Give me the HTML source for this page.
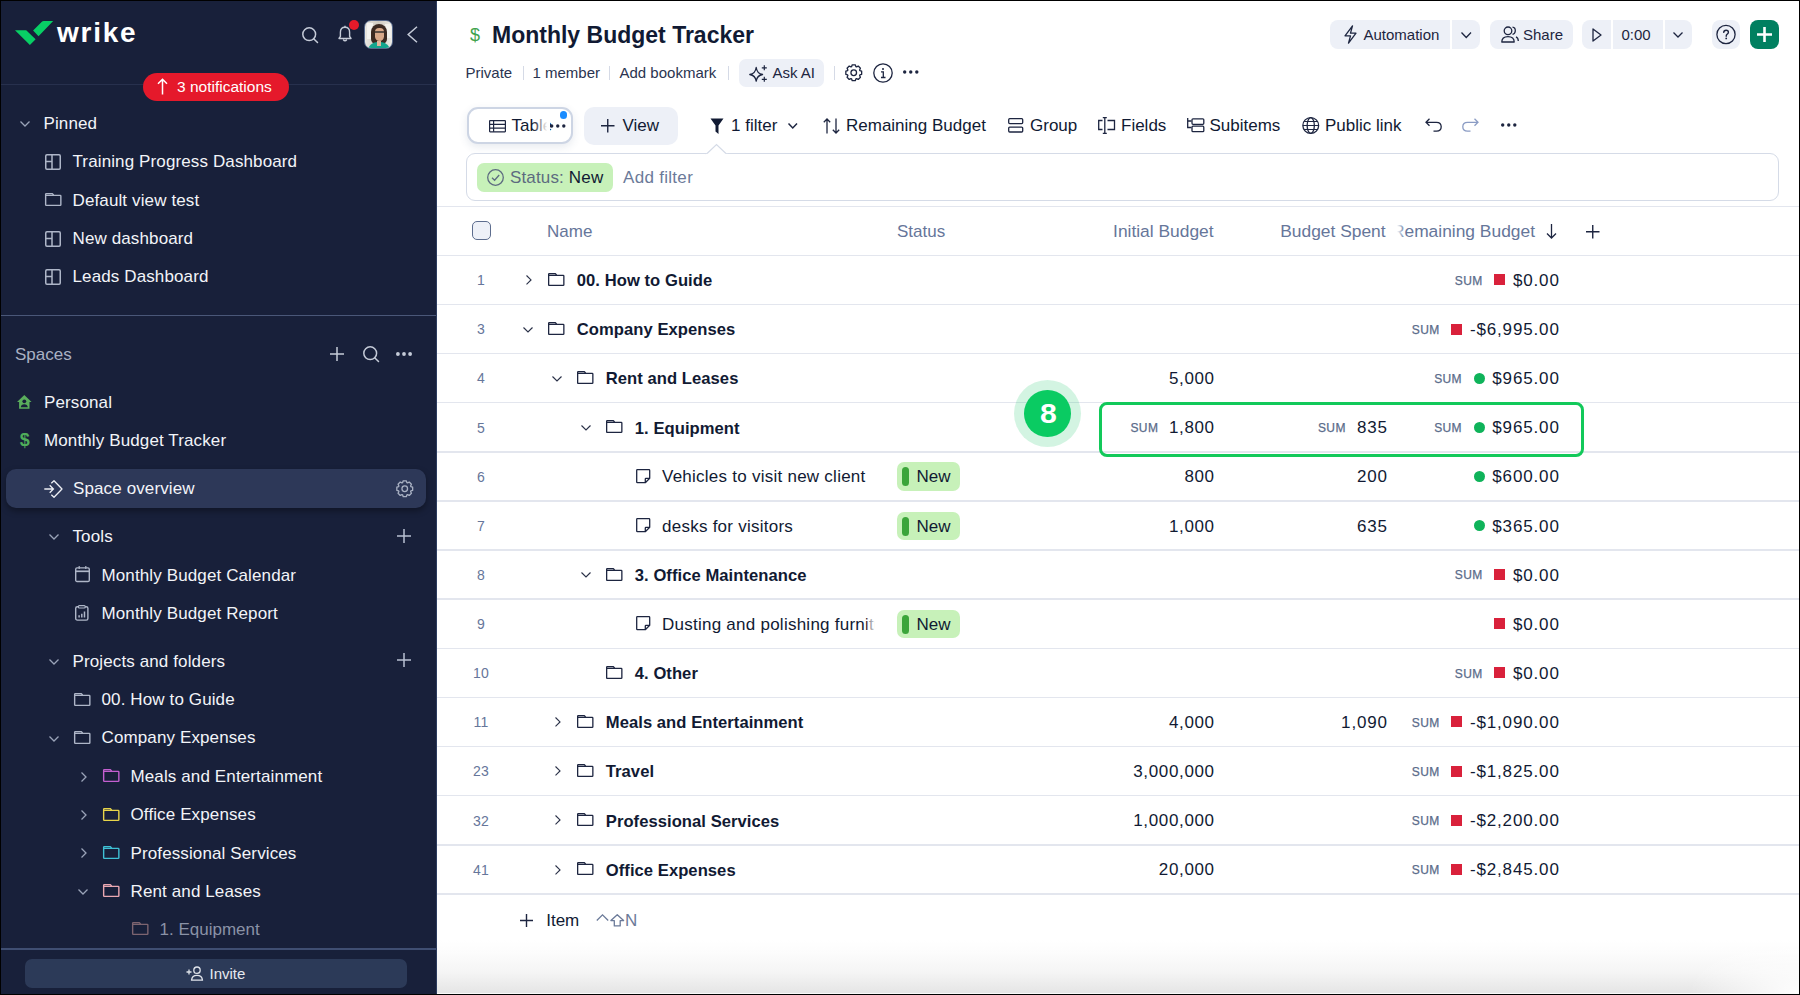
<!DOCTYPE html>
<html><head><meta charset="utf-8">
<style>
*{box-sizing:border-box;margin:0;padding:0}
html,body{width:1800px;height:995px;overflow:hidden;background:#000;font-family:"Liberation Sans",sans-serif}
.a{position:absolute}
.t{position:absolute;white-space:nowrap;font-size:17px;height:24px;line-height:24px}
svg{position:absolute;overflow:visible}
.num{position:absolute;width:40px;text-align:center;font-size:14px;color:#66769a;height:20px;line-height:20px;letter-spacing:0.3px}
.sum{position:absolute;font-size:12px;letter-spacing:.4px;color:#5a6b8a;-webkit-text-stroke:0.25px #5a6b8a;height:16px;line-height:16px}
.pill{position:absolute;width:63px;height:28.5px;border-radius:7px;background:#c7f1b9}
.pill i{position:absolute;left:5px;top:5px;width:7px;height:19px;border-radius:4px;background:#3ba53a}
.pill span{position:absolute;left:20px;top:2.3px;font-size:17px;line-height:24px;color:#111a33}
</style></head><body>
<div class="a" style="left:1px;top:1px;width:436px;height:993px;background:#18203a"></div>
<div class="a" style="left:437px;top:1px;width:1362px;height:993px;background:#fff"></div>
<div class="a" style="left:437px;top:940px;width:1362px;height:53px;background:radial-gradient(ellipse 110px 60px at 100% 100%,rgba(255,255,255,.95),rgba(255,255,255,0)),linear-gradient(#fff,#fcfcfc 25%,#f5f5f5 60%,#e5e5e5)"></div>
<div class="a" style="left:437px;top:993px;width:1362px;height:1px;background:#fafafa"></div>
<svg style="left:14px;top:20px" width="40" height="26" viewBox="0 0 40 26"><path d="M1 10.2 H12.2 L21.6 19.2 L15.9 25 Z" fill="#08cf65"/><path d="M19.1 10.5 L27.6 2 Q28.5 1.1 29.8 1.1 H39.2 L24.5 16.3 Z" fill="#08cf65"/></svg>
<div class="t" style="left:57.0px;top:21.3px;font-size:28px;height:24px;line-height:24px;color:#fff;font-weight:bold;letter-spacing:1.75px;">wrike</div>
<svg style="left:302px;top:27px" width="16" height="16" viewBox="0 0 16 16"><circle cx="7.2" cy="7.2" r="6.4" fill="none" stroke="#c5cbd8" stroke-width="1.5"/><path d="M11.680000000000001 11.680000000000001 L15.5 15.5" stroke="#c5cbd8" stroke-width="1.5" stroke-linecap="round"/></svg>
<svg style="left:337px;top:25px" width="16" height="18" viewBox="0 0 16 18"><path d="M2 13.5 H14 L12.6 11.3 V7.3 Q12.6 2.3 8 2.3 Q3.4 2.3 3.4 7.3 V11.3 Z" fill="none" stroke="#c5cbd8" stroke-width="1.4" stroke-linejoin="round"/><path d="M6.2 14.5 Q8 17 9.8 14.5" fill="none" stroke="#c5cbd8" stroke-width="1.4"/><path d="M8 0.8 V2.3" stroke="#c5cbd8" stroke-width="1.4"/></svg>
<div class="a" style="left:349px;top:20px;width:10px;height:10px;border-radius:50%;background:#e51a2a"></div>
<div class="a" style="left:364px;top:20px;width:29px;height:29px;border-radius:7px;border:1px solid #56698c;background:linear-gradient(90deg,#e9e7e2,#cfcac0 50%,#ecebe6);overflow:hidden"><div class="a" style="left:2px;top:2px;width:6px;height:16px;background:#f4f3ef"></div><div class="a" style="left:20px;top:3px;width:6px;height:14px;background:#f2f1ec"></div><div class="a" style="left:6px;top:3px;width:16px;height:20px;border-radius:8px 8px 5px 5px;background:#3b2a22"></div><div class="a" style="left:9.5px;top:7px;width:9px;height:13px;border-radius:4.5px 4.5px 5px 5px;background:#d8a98a"></div><div class="a" style="left:9.5px;top:10px;width:9px;height:2px;background:#2a2a2a;opacity:.7"></div><div class="a" style="left:3px;top:21px;width:22px;height:9px;border-radius:9px 9px 0 0;background:#13a58e"></div><div class="a" style="left:12px;top:20px;width:4px;height:5px;background:#e0b59a"></div></div>
<svg style="left:407px;top:26px" width="11" height="17" viewBox="0 0 11 17"><path d="M10 0.8 L1.2 8.5 L10 16.2" fill="none" stroke="#c5cbd8" stroke-width="1.5"/></svg>
<div class="a" style="left:1px;top:84px;width:436px;height:1px;background:#27304d;border-radius:0px;"></div>
<div class="a" style="left:143px;top:73px;width:146px;height:28px;background:#e5192b;border-radius:14px;"></div>
<svg style="left:157px;top:78px" width="11" height="17" viewBox="0 0 11 17"><path d="M5.5 16.5 V1.2 M1 5.8 L5.5 1.2 L10 5.8" fill="none" stroke="#fff" stroke-width="1.5"/></svg>
<div class="t" style="left:177.0px;top:75.1px;font-size:15.5px;height:24px;line-height:24px;color:#fff;">3 notifications</div>
<svg style="left:20px;top:121px" width="10" height="5.5" viewBox="0 0 10 5.5"><path d="M0.5 0.5 L5.0 5.0 L9.5 0.5" fill="none" stroke="#9aa3b8" stroke-width="1.3"/></svg>
<div class="t" style="left:43.5px;top:112.0px;font-size:17px;height:24px;line-height:24px;color:#f2f4f8;letter-spacing:0.12px;">Pinned</div>
<svg style="left:45px;top:154.2px" width="16" height="16" viewBox="0 0 16 16"><rect x="0.75" y="0.75" width="14.5" height="14.5" rx="1.2" fill="none" stroke="#aeb6c8" stroke-width="1.5"/><path d="M7 0.75 V15.25 M0.75 7.5 H7" stroke="#aeb6c8" stroke-width="1.5"/></svg>
<div class="t" style="left:72.5px;top:150.4px;font-size:17px;height:24px;line-height:24px;color:#f2f4f8;letter-spacing:0.12px;">Training Progress Dashboard</div>
<svg style="left:44.5px;top:192.7px" width="16.5" height="13" viewBox="0 0 16.5 13"><path d="M0.65 2.4 V1.3 Q0.65 0.65 1.3 0.65 H7.4 L8.9 2.4 H15.2 Q15.85 2.4 15.85 3.1 V11.7 Q15.85 12.35 15.2 12.35 H1.3 Q0.65 12.35 0.65 11.7 Z M0.65 2.4 H8.9" fill="none" stroke="#aeb6c8" stroke-width="1.4" stroke-linejoin="round"/></svg>
<div class="t" style="left:72.5px;top:188.7px;font-size:17px;height:24px;line-height:24px;color:#f2f4f8;letter-spacing:0.12px;">Default view test</div>
<svg style="left:45px;top:230.5px" width="16" height="16" viewBox="0 0 16 16"><rect x="0.75" y="0.75" width="14.5" height="14.5" rx="1.2" fill="none" stroke="#aeb6c8" stroke-width="1.5"/><path d="M7 0.75 V15.25 M0.75 7.5 H7" stroke="#aeb6c8" stroke-width="1.5"/></svg>
<div class="t" style="left:72.5px;top:227.1px;font-size:17px;height:24px;line-height:24px;color:#f2f4f8;letter-spacing:0.12px;">New dashboard</div>
<svg style="left:45px;top:269px" width="16" height="16" viewBox="0 0 16 16"><rect x="0.75" y="0.75" width="14.5" height="14.5" rx="1.2" fill="none" stroke="#aeb6c8" stroke-width="1.5"/><path d="M7 0.75 V15.25 M0.75 7.5 H7" stroke="#aeb6c8" stroke-width="1.5"/></svg>
<div class="t" style="left:72.5px;top:265.4px;font-size:17px;height:24px;line-height:24px;color:#f2f4f8;letter-spacing:0.12px;">Leads Dashboard</div>
<div class="a" style="left:1px;top:315px;width:435px;height:1px;background:#4a5778;border-radius:0px;"></div>
<div class="t" style="left:15.0px;top:343.2px;font-size:17px;height:24px;line-height:24px;color:#a9b1c3;">Spaces</div>
<svg style="left:330px;top:346.5px" width="14" height="14" viewBox="0 0 14 14"><path d="M7.0 0 V14 M0 7.0 H14" stroke="#c5cbd8" stroke-width="1.5"/></svg>
<svg style="left:362.5px;top:346px" width="16" height="16" viewBox="0 0 16 16"><circle cx="7.2" cy="7.2" r="6.4" fill="none" stroke="#c5cbd8" stroke-width="1.5"/><path d="M11.680000000000001 11.680000000000001 L15.5 15.5" stroke="#c5cbd8" stroke-width="1.5" stroke-linecap="round"/></svg>
<svg style="left:396px;top:351.6px" width="16" height="4" viewBox="0 0 16 4"><circle cx="1.9" cy="2" r="1.9" fill="#c5cbd8"/><circle cx="8.0" cy="2" r="1.9" fill="#c5cbd8"/><circle cx="14.1" cy="2" r="1.9" fill="#c5cbd8"/></svg>
<svg style="left:17px;top:395.3px" width="14.6" height="14" viewBox="0 0 14.6 14"><path d="M7.3 0 L14.6 6.9 H12.5 V13.8 H2.1 V6.9 H0 Z" fill="#5aae5c"/><circle cx="7.3" cy="6.3" r="1.9" fill="#18203a"/><path d="M3.8 12.2 Q4.1 9.3 7.3 9.3 Q10.5 9.3 10.8 12.2 Z" fill="#18203a"/></svg>
<div class="t" style="left:44.0px;top:391.2px;font-size:17px;height:24px;line-height:24px;color:#f2f4f8;letter-spacing:0.12px;">Personal</div>
<div class="t" style="left:19.8px;top:428.1px;font-size:18px;height:24px;line-height:24px;color:#4fae5a;font-weight:bold;">$</div>
<div class="t" style="left:44.0px;top:429.0px;font-size:17px;height:24px;line-height:24px;color:#f2f4f8;letter-spacing:0.12px;">Monthly Budget Tracker</div>
<div class="a" style="left:6px;top:469px;width:420px;height:38.5px;background:#2d3858;border-radius:10px;box-shadow:0 3px 6px rgba(0,0,0,.35);"></div>
<svg style="left:44px;top:479.5px" width="19" height="18" viewBox="0 0 19 18"><path d="M0.3 9 H9.4 M5.7 5.3 L9.4 9 L5.7 12.7" fill="none" stroke="#eef0f5" stroke-width="1.3"/><path d="M7.3 3.3 L10 0.8 L18 9 L10 17.2 L7.3 14.7" fill="none" stroke="#eef0f5" stroke-width="1.3" stroke-linejoin="round"/></svg>
<div class="t" style="left:73.0px;top:477.3px;font-size:17px;height:24px;line-height:24px;color:#f2f4f8;letter-spacing:0.12px;">Space overview</div>
<svg style="left:396px;top:479.5px" width="17.5" height="17.5" viewBox="0 0 17.5 17.5"><path d="M14.84 6.56 L16.66 7.23 L16.66 10.27 L14.84 10.94 L14.61 11.51 L15.42 13.26 L13.26 15.42 L11.51 14.61 L10.94 14.84 L10.27 16.66 L7.23 16.66 L6.56 14.84 L5.99 14.61 L4.24 15.42 L2.08 13.26 L2.89 11.51 L2.66 10.94 L0.84 10.27 L0.84 7.23 L2.66 6.56 L2.89 5.99 L2.08 4.24 L4.24 2.08 L5.99 2.89 L6.56 2.66 L7.23 0.84 L10.27 0.84 L10.94 2.66 L11.51 2.89 L13.26 2.08 L15.42 4.24 L14.61 5.99 Z" fill="none" stroke="#a9b1c3" stroke-width="1.3" stroke-linejoin="round"/><circle cx="8.75" cy="8.75" r="2.80" fill="none" stroke="#a9b1c3" stroke-width="1.3"/></svg>
<svg style="left:49px;top:534px" width="10" height="5.5" viewBox="0 0 10 5.5"><path d="M0.5 0.5 L5.0 5.0 L9.5 0.5" fill="none" stroke="#9aa3b8" stroke-width="1.3"/></svg>
<div class="t" style="left:72.5px;top:525.2px;font-size:17px;height:24px;line-height:24px;color:#f2f4f8;letter-spacing:0.12px;">Tools</div>
<svg style="left:397px;top:528.6px" width="14" height="14" viewBox="0 0 14 14"><path d="M7.0 0 V14 M0 7.0 H14" stroke="#b8c0d2" stroke-width="1.5"/></svg>
<svg style="left:75px;top:565.8px" width="15" height="16.2" viewBox="0 0 15 16.2"><rect x="0.7" y="1.9" width="13.6" height="13.6" rx="1.3" fill="none" stroke="#aeb6c8" stroke-width="1.4"/><path d="M0.7 5.3 H14.3" stroke="#aeb6c8" stroke-width="1.7"/><path d="M4.2 0 V3 M10.8 0 V3" stroke="#aeb6c8" stroke-width="1.2"/></svg>
<div class="t" style="left:101.5px;top:564.3px;font-size:17px;height:24px;line-height:24px;color:#f2f4f8;letter-spacing:0.12px;">Monthly Budget Calendar</div>
<svg style="left:75.2px;top:604.6px" width="13.6" height="15.8" viewBox="0 0 13.6 15.8"><rect x="0.7" y="1.7" width="12.2" height="13.4" rx="1.6" fill="none" stroke="#aeb6c8" stroke-width="1.4"/><rect x="3.4" y="0.6" width="6.8" height="2.4" rx="0.9" fill="#18203a" stroke="#aeb6c8" stroke-width="1.2"/><path d="M4.1 12.6 V10.2 M6.8 12.6 V8.8 M9.5 12.6 V6.6" stroke="#aeb6c8" stroke-width="1.5"/></svg>
<div class="t" style="left:101.5px;top:601.5px;font-size:17px;height:24px;line-height:24px;color:#f2f4f8;letter-spacing:0.12px;">Monthly Budget Report</div>
<svg style="left:49px;top:658.5px" width="10" height="5.5" viewBox="0 0 10 5.5"><path d="M0.5 0.5 L5.0 5.0 L9.5 0.5" fill="none" stroke="#9aa3b8" stroke-width="1.3"/></svg>
<div class="t" style="left:72.5px;top:649.5px;font-size:17px;height:24px;line-height:24px;color:#f2f4f8;letter-spacing:0.12px;">Projects and folders</div>
<svg style="left:397px;top:653.4px" width="14" height="14" viewBox="0 0 14 14"><path d="M7.0 0 V14 M0 7.0 H14" stroke="#b8c0d2" stroke-width="1.5"/></svg>
<svg style="left:74px;top:692.5px" width="16.5" height="13" viewBox="0 0 16.5 13"><path d="M0.65 2.4 V1.3 Q0.65 0.65 1.3 0.65 H7.4 L8.9 2.4 H15.2 Q15.85 2.4 15.85 3.1 V11.7 Q15.85 12.35 15.2 12.35 H1.3 Q0.65 12.35 0.65 11.7 Z M0.65 2.4 H8.9" fill="none" stroke="#aeb6c8" stroke-width="1.4" stroke-linejoin="round"/></svg>
<div class="t" style="left:101.5px;top:688.1px;font-size:17px;height:24px;line-height:24px;color:#f2f4f8;letter-spacing:0.12px;">00. How to Guide</div>
<svg style="left:49px;top:735.5px" width="10" height="5.5" viewBox="0 0 10 5.5"><path d="M0.5 0.5 L5.0 5.0 L9.5 0.5" fill="none" stroke="#9aa3b8" stroke-width="1.3"/></svg>
<svg style="left:74px;top:730.7px" width="16.5" height="13" viewBox="0 0 16.5 13"><path d="M0.65 2.4 V1.3 Q0.65 0.65 1.3 0.65 H7.4 L8.9 2.4 H15.2 Q15.85 2.4 15.85 3.1 V11.7 Q15.85 12.35 15.2 12.35 H1.3 Q0.65 12.35 0.65 11.7 Z M0.65 2.4 H8.9" fill="none" stroke="#aeb6c8" stroke-width="1.4" stroke-linejoin="round"/></svg>
<div class="t" style="left:101.5px;top:726.3px;font-size:17px;height:24px;line-height:24px;color:#f2f4f8;letter-spacing:0.12px;">Company Expenses</div>
<svg style="left:81px;top:771.5px" width="5.5" height="10" viewBox="0 0 5.5 10"><path d="M0.5 0.5 L5.0 5.0 L0.5 9.5" fill="none" stroke="#9aa3b8" stroke-width="1.3"/></svg>
<svg style="left:102.5px;top:769.2px" width="16.5" height="13" viewBox="0 0 16.5 13"><path d="M0.65 2.4 V1.3 Q0.65 0.65 1.3 0.65 H7.4 L8.9 2.4 H15.2 Q15.85 2.4 15.85 3.1 V11.7 Q15.85 12.35 15.2 12.35 H1.3 Q0.65 12.35 0.65 11.7 Z M0.65 2.4 H8.9" fill="none" stroke="#c35fd0" stroke-width="1.4" stroke-linejoin="round"/></svg>
<div class="t" style="left:130.5px;top:764.9px;font-size:17px;height:24px;line-height:24px;color:#f2f4f8;letter-spacing:0.12px;">Meals and Entertainment</div>
<svg style="left:81px;top:809.7px" width="5.5" height="10" viewBox="0 0 5.5 10"><path d="M0.5 0.5 L5.0 5.0 L0.5 9.5" fill="none" stroke="#9aa3b8" stroke-width="1.3"/></svg>
<svg style="left:102.5px;top:807.5px" width="16.5" height="13" viewBox="0 0 16.5 13"><path d="M0.65 2.4 V1.3 Q0.65 0.65 1.3 0.65 H7.4 L8.9 2.4 H15.2 Q15.85 2.4 15.85 3.1 V11.7 Q15.85 12.35 15.2 12.35 H1.3 Q0.65 12.35 0.65 11.7 Z M0.65 2.4 H8.9" fill="none" stroke="#e8d54a" stroke-width="1.4" stroke-linejoin="round"/></svg>
<div class="t" style="left:130.5px;top:803.1px;font-size:17px;height:24px;line-height:24px;color:#f2f4f8;letter-spacing:0.12px;">Office Expenses</div>
<svg style="left:81px;top:848.2px" width="5.5" height="10" viewBox="0 0 5.5 10"><path d="M0.5 0.5 L5.0 5.0 L0.5 9.5" fill="none" stroke="#9aa3b8" stroke-width="1.3"/></svg>
<svg style="left:102.5px;top:846.0px" width="16.5" height="13" viewBox="0 0 16.5 13"><path d="M0.65 2.4 V1.3 Q0.65 0.65 1.3 0.65 H7.4 L8.9 2.4 H15.2 Q15.85 2.4 15.85 3.1 V11.7 Q15.85 12.35 15.2 12.35 H1.3 Q0.65 12.35 0.65 11.7 Z M0.65 2.4 H8.9" fill="none" stroke="#3fc1d6" stroke-width="1.4" stroke-linejoin="round"/></svg>
<div class="t" style="left:130.5px;top:841.6px;font-size:17px;height:24px;line-height:24px;color:#f2f4f8;letter-spacing:0.12px;">Professional Services</div>
<svg style="left:78px;top:889px" width="10" height="5.5" viewBox="0 0 10 5.5"><path d="M0.5 0.5 L5.0 5.0 L9.5 0.5" fill="none" stroke="#9aa3b8" stroke-width="1.3"/></svg>
<svg style="left:102.5px;top:884.2px" width="16.5" height="13" viewBox="0 0 16.5 13"><path d="M0.65 2.4 V1.3 Q0.65 0.65 1.3 0.65 H7.4 L8.9 2.4 H15.2 Q15.85 2.4 15.85 3.1 V11.7 Q15.85 12.35 15.2 12.35 H1.3 Q0.65 12.35 0.65 11.7 Z M0.65 2.4 H8.9" fill="none" stroke="#eaa8b2" stroke-width="1.4" stroke-linejoin="round"/></svg>
<div class="t" style="left:130.5px;top:879.9px;font-size:17px;height:24px;line-height:24px;color:#f2f4f8;letter-spacing:0.12px;">Rent and Leases</div>
<svg style="left:131.5px;top:921.8px" width="16.5" height="13" viewBox="0 0 16.5 13"><path d="M0.65 2.4 V1.3 Q0.65 0.65 1.3 0.65 H7.4 L8.9 2.4 H15.2 Q15.85 2.4 15.85 3.1 V11.7 Q15.85 12.35 15.2 12.35 H1.3 Q0.65 12.35 0.65 11.7 Z M0.65 2.4 H8.9" fill="none" stroke="#7d6470" stroke-width="1.4" stroke-linejoin="round"/></svg>
<div class="t" style="left:159.5px;top:918.3px;font-size:17px;height:24px;line-height:24px;color:#8a92a6;">1. Equipment</div>
<div class="a" style="left:1px;top:947.8px;width:435px;height:2px;background:#3f4e72;border-radius:0px;"></div>
<div class="a" style="left:25px;top:959px;width:382px;height:28.5px;background:#2c3a58;border-radius:7px;"></div>
<svg style="left:186px;top:966px" width="17" height="15" viewBox="0 0 17 15"><path d="M0.5 6 H5.5 M3 3.5 V8.5" stroke="#dfe3ea" stroke-width="1.3"/><circle cx="11" cy="4.2" r="3.2" fill="none" stroke="#dfe3ea" stroke-width="1.3"/><path d="M5.5 14.2 Q6 9.3 11 9.3 Q16 9.3 16.5 14.2 Z" fill="none" stroke="#dfe3ea" stroke-width="1.3" stroke-linejoin="round"/></svg>
<div class="t" style="left:209.5px;top:961.8px;font-size:15px;height:24px;line-height:24px;color:#e6e9ef;">Invite</div>
<div class="a" style="left:436px;top:1px;width:1px;height:993px;background:#2c3c5f;border-radius:0px;"></div>
<div class="t" style="left:470.0px;top:22.7px;font-size:18px;height:24px;line-height:24px;color:#3fa34d;">$</div>
<div class="t" style="left:492.0px;top:22.9px;font-size:23px;height:24px;line-height:24px;color:#111a33;font-weight:bold;">Monthly Budget Tracker</div>
<div class="t" style="left:465.5px;top:60.8px;font-size:15px;height:24px;line-height:24px;color:#2a3450;">Private</div>
<div class="a" style="left:522.5px;top:66px;width:1.2px;height:14px;background:#d5dae6;border-radius:0px;"></div>
<div class="t" style="left:532.5px;top:60.8px;font-size:15px;height:24px;line-height:24px;color:#2a3450;">1 member</div>
<div class="a" style="left:609px;top:66px;width:1.2px;height:14px;background:#d5dae6;border-radius:0px;"></div>
<div class="t" style="left:619.5px;top:60.8px;font-size:15px;height:24px;line-height:24px;color:#2a3450;">Add bookmark</div>
<div class="a" style="left:727.7px;top:66px;width:1.2px;height:14px;background:#d5dae6;border-radius:0px;"></div>
<div class="a" style="left:739px;top:59px;width:85px;height:28px;background:#edf0f7;border-radius:7px;"></div>
<svg style="left:748.5px;top:64.5px" width="19" height="17.5" viewBox="0 0 19 17.5"><path d="M7.2 2.5 Q8 8.6 13.6 9.5 Q8 10.4 7.2 16.2 Q6.4 10.4 0.8 9.5 Q6.4 8.6 7.2 2.5 Z" fill="none" stroke="#1d2540" stroke-width="1.3" stroke-linejoin="round"/><path d="M15.3 0.3 V5.3 M12.8 2.8 H17.8 M15.3 11.8 V16.8 M12.8 14.3 H17.8" stroke="#1d2540" stroke-width="1.2"/></svg>
<div class="t" style="left:772.5px;top:60.8px;font-size:15px;height:24px;line-height:24px;color:#1d2540;">Ask AI</div>
<div class="a" style="left:834px;top:66px;width:1.2px;height:14px;background:#d5dae6;border-radius:0px;"></div>
<svg style="left:845px;top:64px" width="17.5" height="17.5" viewBox="0 0 17.5 17.5"><path d="M14.84 6.56 L16.66 7.23 L16.66 10.27 L14.84 10.94 L14.61 11.51 L15.42 13.26 L13.26 15.42 L11.51 14.61 L10.94 14.84 L10.27 16.66 L7.23 16.66 L6.56 14.84 L5.99 14.61 L4.24 15.42 L2.08 13.26 L2.89 11.51 L2.66 10.94 L0.84 10.27 L0.84 7.23 L2.66 6.56 L2.89 5.99 L2.08 4.24 L4.24 2.08 L5.99 2.89 L6.56 2.66 L7.23 0.84 L10.27 0.84 L10.94 2.66 L11.51 2.89 L13.26 2.08 L15.42 4.24 L14.61 5.99 Z" fill="none" stroke="#1d2540" stroke-width="1.3" stroke-linejoin="round"/><circle cx="8.75" cy="8.75" r="2.80" fill="none" stroke="#1d2540" stroke-width="1.3"/></svg>
<svg style="left:872.5px;top:63px" width="20" height="20" viewBox="0 0 20 20"><circle cx="10" cy="10" r="9.2" fill="none" stroke="#1d2540" stroke-width="1.3"/><circle cx="10" cy="6" r="1" fill="#1d2540"/><path d="M8 8.8 H10.3 V14.5 M8 14.5 H12.5" fill="none" stroke="#1d2540" stroke-width="1.3"/></svg>
<svg style="left:903px;top:70px" width="15.5" height="4" viewBox="0 0 15.5 4"><circle cx="1.7" cy="2" r="1.7" fill="#1d2540"/><circle cx="7.75" cy="2" r="1.7" fill="#1d2540"/><circle cx="13.8" cy="2" r="1.7" fill="#1d2540"/></svg>
<div class="a" style="left:1330px;top:20px;width:150px;height:28.5px;background:#edf0f7;border-radius:8px;"></div>
<div class="a" style="left:1450px;top:20px;width:2px;height:28.5px;background:#fff;border-radius:0px;"></div>
<svg style="left:1343.5px;top:24.5px" width="13" height="19" viewBox="0 0 13 19"><path d="M8.5 0.8 L1 10.8 H6.5 L4.5 18.2 L12 8.2 H6.5 Z" fill="none" stroke="#1d2540" stroke-width="1.3" stroke-linejoin="round"/></svg>
<div class="t" style="left:1363.5px;top:22.5px;font-size:15px;height:24px;line-height:24px;color:#1d2540;">Automation</div>
<svg style="left:1461px;top:31.5px" width="10.5" height="6" viewBox="0 0 10.5 6"><path d="M0.5 0.5 L5.25 5.5 L10.0 0.5" fill="none" stroke="#1d2540" stroke-width="1.3"/></svg>
<div class="a" style="left:1490px;top:20px;width:82.5px;height:28.5px;background:#edf0f7;border-radius:8px;"></div>
<svg style="left:1501px;top:25.5px" width="18" height="17" viewBox="0 0 18 17"><circle cx="7" cy="4.8" r="3.8" fill="none" stroke="#1d2540" stroke-width="1.3"/><path d="M0.8 16 Q0.8 10.6 7 10.6 Q13.2 10.6 13.2 16 Z" fill="none" stroke="#1d2540" stroke-width="1.3" stroke-linejoin="round"/><path d="M11.5 1.2 Q14.5 1.5 14.3 5 Q14 8 11.5 8.3 M15 10.8 Q17.3 11.8 17.3 15" fill="none" stroke="#1d2540" stroke-width="1.3"/></svg>
<div class="t" style="left:1523.0px;top:22.5px;font-size:15px;height:24px;line-height:24px;color:#1d2540;">Share</div>
<div class="a" style="left:1582px;top:20px;width:110px;height:28.5px;background:#edf0f7;border-radius:8px;"></div>
<div class="a" style="left:1611px;top:20px;width:2px;height:28.5px;background:#fff;border-radius:0px;"></div>
<div class="a" style="left:1662.5px;top:20px;width:2px;height:28.5px;background:#fff;border-radius:0px;"></div>
<svg style="left:1592px;top:27.5px" width="10" height="14" viewBox="0 0 10 14"><path d="M1 1 L9 7 L1 13 Z" fill="none" stroke="#1d2540" stroke-width="1.3" stroke-linejoin="round"/></svg>
<div class="t" style="left:1621.5px;top:22.5px;font-size:15px;height:24px;line-height:24px;color:#1d2540;">0:00</div>
<svg style="left:1673px;top:31.5px" width="10" height="5.5" viewBox="0 0 10 5.5"><path d="M0.5 0.5 L5.0 5.0 L9.5 0.5" fill="none" stroke="#1d2540" stroke-width="1.3"/></svg>
<div class="a" style="left:1712px;top:20px;width:28px;height:28.5px;background:#edf0f7;border-radius:8px;"></div>
<svg style="left:1716px;top:25px" width="20" height="20" viewBox="0 0 20 20"><circle cx="10" cy="9.5" r="9.1" fill="none" stroke="#1d2540" stroke-width="1.3"/><path d="M7.7 7.4 Q7.9 5.2 10.1 5.2 Q12.4 5.2 12.4 7.3 Q12.4 8.7 11 9.4 Q10.2 9.9 10.2 11.3" fill="none" stroke="#1d2540" stroke-width="1.4" stroke-linecap="round"/><circle cx="10.2" cy="13.4" r="0.9" fill="#1d2540"/></svg>
<div class="a" style="left:1750px;top:20px;width:28.5px;height:28.5px;background:#008060;border-radius:8px;"></div>
<svg style="left:1757px;top:27px" width="15" height="15" viewBox="0 0 15 15"><path d="M7.5 0 V15 M0 7.5 H15" stroke="#fff" stroke-width="2.6"/></svg>
<div class="a" style="left:467px;top:107px;width:106px;height:36.5px;border:2px solid #cdd5e4;border-radius:11px;background:#fff;box-shadow:0 3px 8px rgba(60,80,120,.12)"></div>
<svg style="left:488.5px;top:119.8px" width="17" height="12.5" viewBox="0 0 17 12.5"><rect x="0.6" y="0.6" width="15.8" height="11.2" rx="0.5" fill="none" stroke="#1d2540" stroke-width="1.2"/><path d="M0.6 4.4 H16.4 M0.6 8.1 H16.4 M4.6 0.6 V11.8" stroke="#1d2540" stroke-width="1.2"/></svg>
<div class="t" style="left:511.5px;top:114.2px;font-size:17px;height:24px;line-height:24px;color:#111a33;">Table</div>
<div class="a" style="left:533px;top:112px;width:17px;height:26px;background:linear-gradient(90deg,rgba(255,255,255,0),#fff 85%)"></div>
<svg style="left:549.5px;top:123.5px" width="15.5" height="4" viewBox="0 0 15.5 4"><circle cx="1.7" cy="2" r="1.7" fill="#1d2540"/><circle cx="7.75" cy="2" r="1.7" fill="#1d2540"/><circle cx="13.8" cy="2" r="1.7" fill="#1d2540"/></svg>
<div class="a" style="left:559.5px;top:111px;width:7.5px;height:7.5px;border-radius:50%;background:#1a8cff"></div>
<div class="a" style="left:584px;top:106.5px;width:94px;height:38px;background:#edf0f7;border-radius:10px;"></div>
<svg style="left:601px;top:118.5px" width="13.5" height="13.5" viewBox="0 0 13.5 13.5"><path d="M6.75 0 V13.5 M0 6.75 H13.5" stroke="#1d2540" stroke-width="1.4"/></svg>
<div class="t" style="left:622.5px;top:114.2px;font-size:17px;height:24px;line-height:24px;color:#111a33;">View</div>
<svg style="left:710px;top:118px" width="14" height="16.5" viewBox="0 0 14 16.5"><path d="M0.5 0.5 H13.5 L8.5 7.5 V16 L5.5 13.5 V7.5 Z" fill="#111a33"/></svg>
<div class="t" style="left:731.0px;top:114.4px;font-size:17px;height:24px;line-height:24px;color:#111a33;">1 filter</div>
<svg style="left:788px;top:122.5px" width="9.5" height="5.5" viewBox="0 0 9.5 5.5"><path d="M0.5 0.5 L4.75 5.0 L9.0 0.5" fill="none" stroke="#1d2540" stroke-width="1.5"/></svg>
<svg style="left:822.5px;top:117.5px" width="17.5" height="16" viewBox="0 0 17.5 16"><path d="M4 15.5 V1 M0.8 4.2 L4 1 L7.2 4.2 M13 0.5 V15 M9.8 11.8 L13 15 L16.2 11.8" fill="none" stroke="#1d2540" stroke-width="1.3"/></svg>
<div class="t" style="left:846.0px;top:114.4px;font-size:17px;height:24px;line-height:24px;color:#111a33;">Remaining Budget</div>
<svg style="left:1008px;top:118px" width="15.5" height="14.5" viewBox="0 0 15.5 14.5"><rect x="0.7" y="0.7" width="14" height="4.9" rx="1" fill="none" stroke="#1d2540" stroke-width="1.3"/><rect x="0.7" y="9.1" width="14" height="4.9" rx="1" fill="none" stroke="#1d2540" stroke-width="1.3"/></svg>
<div class="t" style="left:1030.0px;top:114.4px;font-size:17px;height:24px;line-height:24px;color:#111a33;">Group</div>
<svg style="left:1098px;top:117px" width="17.5" height="17" viewBox="0 0 17.5 17"><path d="M4.5 3.5 H0.7 V12.5 H4.5 M9.5 3.5 H16.5 V12.5 H9.5 M6.8 0.7 V16.3 M4.8 0.7 H8.8 M4.8 16.3 H8.8" fill="none" stroke="#1d2540" stroke-width="1.3"/></svg>
<div class="t" style="left:1121.0px;top:114.4px;font-size:17px;height:24px;line-height:24px;color:#111a33;">Fields</div>
<svg style="left:1186.5px;top:118px" width="17.5" height="14.5" viewBox="0 0 17.5 14.5"><path d="M0.7 0 V9.5 H4.5 M0.7 3 H4.5" fill="none" stroke="#1d2540" stroke-width="1.3"/><rect x="5" y="0.8" width="11.8" height="5.5" rx="1" fill="none" stroke="#1d2540" stroke-width="1.3"/><rect x="5" y="8.2" width="11.8" height="5.5" rx="1" fill="none" stroke="#1d2540" stroke-width="1.3"/></svg>
<div class="t" style="left:1209.5px;top:114.4px;font-size:17px;height:24px;line-height:24px;color:#111a33;">Subitems</div>
<svg style="left:1301.5px;top:117px" width="17.5" height="17" viewBox="0 0 17.5 17"><circle cx="8.75" cy="8.5" r="7.9" fill="none" stroke="#1d2540" stroke-width="1.3"/><ellipse cx="8.75" cy="8.5" rx="3.6" ry="7.9" fill="none" stroke="#1d2540" stroke-width="1.3"/><path d="M1 8.5 H16.5 M2.2 4.5 H15.3 M2.2 12.5 H15.3" stroke="#1d2540" stroke-width="1.2"/></svg>
<div class="t" style="left:1325.0px;top:114.4px;font-size:17px;height:24px;line-height:24px;color:#111a33;">Public link</div>
<svg style="left:1424.5px;top:118px" width="17" height="14" viewBox="0 0 17 14"><path d="M4.5 0.8 L1 4.3 L4.5 7.8 M1 4.3 H11.5 Q16.2 4.3 16.2 8.8 Q16.2 13.2 11.5 13.2 H8.5" fill="none" stroke="#1d2540" stroke-width="1.3"/></svg>
<svg style="left:1462px;top:118px" width="17" height="14" viewBox="0 0 17 14"><path d="M12.5 0.8 L16 4.3 L12.5 7.8 M16 4.3 H5.5 Q0.8 4.3 0.8 8.8 Q0.8 13.2 5.5 13.2 H8.5" fill="none" stroke="#8b9cc4" stroke-width="1.3"/></svg>
<svg style="left:1500.5px;top:123px" width="15.5" height="4" viewBox="0 0 15.5 4"><circle cx="1.7" cy="2" r="1.7" fill="#1d2540"/><circle cx="7.75" cy="2" r="1.7" fill="#1d2540"/><circle cx="13.8" cy="2" r="1.7" fill="#1d2540"/></svg>
<div class="a" style="left:466px;top:153.3px;width:1312.5px;height:47.5px;border:1.2px solid #d5dbe7;border-radius:9px;background:#fff"></div>
<svg style="left:705.5px;top:143.5px" width="22" height="11" viewBox="0 0 22 11"><path d="M0 10.5 L10.5 0.5 L21 10.5" fill="#fff" stroke="#d5dbe7" stroke-width="1.2"/><rect x="0" y="9.9" width="22" height="2" fill="#fff"/></svg>
<div class="a" style="left:477px;top:163px;width:136px;height:28.5px;background:#c7f1b9;border-radius:7px;"></div>
<svg style="left:487px;top:169px" width="17" height="17" viewBox="0 0 17 17"><circle cx="8.5" cy="8.5" r="7.8" fill="none" stroke="#5d6b80" stroke-width="1.3"/><path d="M5 8.7 L7.6 11.2 L12.2 6" fill="none" stroke="#5d6b80" stroke-width="1.3"/></svg>
<div class="t" style="left:510.0px;top:165.5px;font-size:17px;height:24px;line-height:24px;color:#5d6b80;letter-spacing:0.15px;">Status: <span style="color:#111a33">New</span></div>
<div class="t" style="left:623.0px;top:165.5px;font-size:17px;height:24px;line-height:24px;color:#6b7a99;letter-spacing:0.3px;">Add filter</div>
<div class="a" style="left:437px;top:205.8px;width:1362px;height:1.2px;background:#e3e6ee;border-radius:0px;"></div>
<div class="a" style="left:472px;top:221.2px;width:19px;height:19px;border:1.5px solid #5d6d8e;border-radius:5px;background:#eef1f8"></div>
<div class="t" style="left:547.0px;top:219.7px;font-size:17px;height:24px;line-height:24px;color:#66769a;">Name</div>
<div class="t" style="left:897.0px;top:219.7px;font-size:17px;height:24px;line-height:24px;color:#66769a;">Status</div>
<div class="t" style="right:586.4px;top:219.1px;font-size:17.4px;height:24px;line-height:24px;color:#66769a;">Initial Budget</div>
<div class="t" style="right:414.4px;top:219.1px;font-size:17.4px;height:24px;line-height:24px;color:#66769a;">Budget Spent</div>
<div class="a" style="left:1397px;top:212px;width:141px;height:36px;overflow:hidden"><div class="t" style="right:3px;top:7.1px;color:#66769a;font-size:17.4px">Remaining Budget</div><div class="a" style="left:0;top:0;width:8px;height:36px;background:linear-gradient(90deg,#fff,rgba(255,255,255,0))"></div></div>
<svg style="left:1545.5px;top:224px" width="11" height="15" viewBox="0 0 11 15"><path d="M5.5 0 V14 M1 9.5 L5.5 14 L10 9.5" fill="none" stroke="#1d2540" stroke-width="1.3"/></svg>
<svg style="left:1586px;top:224.5px" width="13.5" height="13.5" viewBox="0 0 13.5 13.5"><path d="M6.75 0 V13.5 M0 6.75 H13.5" stroke="#1d2540" stroke-width="1.4"/></svg>
<div class="a" style="left:437px;top:254.5px;width:1362px;height:1.5px;background:#e3e6ee;border-radius:0px;"></div>
<div class="num" style="left:461px;top:270.2px">1</div>
<svg style="left:525.8px;top:275.06px" width="5.5" height="9.8" viewBox="0 0 5.5 9.8"><path d="M0.5 0.5 L5.0 4.9 L0.5 9.3" fill="none" stroke="#2a3148" stroke-width="1.15"/></svg>
<svg style="left:548.4px;top:272.86px" width="16.5" height="13" viewBox="0 0 16.5 13"><path d="M0.65 2.4 V1.3 Q0.65 0.65 1.3 0.65 H7.4 L8.9 2.4 H15.2 Q15.85 2.4 15.85 3.1 V11.7 Q15.85 12.35 15.2 12.35 H1.3 Q0.65 12.35 0.65 11.7 Z M0.65 2.4 H8.9" fill="none" stroke="#1d2540" stroke-width="1.3" stroke-linejoin="round"/></svg>
<div class="t" style="left:576.8px;top:269.2px;font-size:16.6px;height:24px;line-height:24px;color:#111a33;font-weight:bold;letter-spacing:0.05px;">00. How to Guide</div>
<div class="a" style="right:240.3px;top:267.9px;height:24px;display:flex;align-items:center;white-space:nowrap"><span style="font-size:12px;letter-spacing:.4px;color:#5a6b8a;-webkit-text-stroke:0.25px #5a6b8a;margin-right:11.8px;position:relative;top:0.8px">SUM</span><i style="display:block;width:11px;height:11px;background:#d9213b;margin-right:7.5px"></i><span style="font-size:17px;color:#111a33;letter-spacing:0.85px;line-height:24px;position:relative;top:1.1px">$0.00</span></div>
<div class="a" style="left:437px;top:303.7px;width:1362px;height:1.5px;background:#e3e6ee;border-radius:0px;"></div>
<div class="num" style="left:461px;top:319.3px">3</div>
<svg style="left:523.3px;top:326.68px" width="10" height="5.5" viewBox="0 0 10 5.5"><path d="M0.5 0.5 L5.0 5.0 L9.5 0.5" fill="none" stroke="#2a3148" stroke-width="1.15"/></svg>
<svg style="left:548.4px;top:321.98px" width="16.5" height="13" viewBox="0 0 16.5 13"><path d="M0.65 2.4 V1.3 Q0.65 0.65 1.3 0.65 H7.4 L8.9 2.4 H15.2 Q15.85 2.4 15.85 3.1 V11.7 Q15.85 12.35 15.2 12.35 H1.3 Q0.65 12.35 0.65 11.7 Z M0.65 2.4 H8.9" fill="none" stroke="#1d2540" stroke-width="1.3" stroke-linejoin="round"/></svg>
<div class="t" style="left:576.8px;top:318.3px;font-size:16.6px;height:24px;line-height:24px;color:#111a33;font-weight:bold;letter-spacing:0.05px;">Company Expenses</div>
<div class="a" style="right:240.3px;top:317.0px;height:24px;display:flex;align-items:center;white-space:nowrap"><span style="font-size:12px;letter-spacing:.4px;color:#5a6b8a;-webkit-text-stroke:0.25px #5a6b8a;margin-right:11.8px;position:relative;top:0.8px">SUM</span><i style="display:block;width:11px;height:11px;background:#d9213b;margin-right:7.5px"></i><span style="font-size:17px;color:#111a33;letter-spacing:0.85px;line-height:24px;position:relative;top:1.1px">-$6,995.00</span></div>
<div class="a" style="left:437px;top:352.8px;width:1362px;height:1.5px;background:#e3e6ee;border-radius:0px;"></div>
<div class="num" style="left:461px;top:368.4px">4</div>
<svg style="left:552.3px;top:375.8px" width="10" height="5.5" viewBox="0 0 10 5.5"><path d="M0.5 0.5 L5.0 5.0 L9.5 0.5" fill="none" stroke="#2a3148" stroke-width="1.15"/></svg>
<svg style="left:577.4px;top:371.1px" width="16.5" height="13" viewBox="0 0 16.5 13"><path d="M0.65 2.4 V1.3 Q0.65 0.65 1.3 0.65 H7.4 L8.9 2.4 H15.2 Q15.85 2.4 15.85 3.1 V11.7 Q15.85 12.35 15.2 12.35 H1.3 Q0.65 12.35 0.65 11.7 Z M0.65 2.4 H8.9" fill="none" stroke="#1d2540" stroke-width="1.3" stroke-linejoin="round"/></svg>
<div class="t" style="left:605.8px;top:367.4px;font-size:16.6px;height:24px;line-height:24px;color:#111a33;font-weight:bold;letter-spacing:0.05px;">Rent and Leases</div>
<div class="t" style="right:585.3px;top:367.2px;font-size:17px;height:24px;line-height:24px;color:#111a33;letter-spacing:0.65px;">5,000</div>
<div class="a" style="right:240.3px;top:366.1px;height:24px;display:flex;align-items:center;white-space:nowrap"><span style="font-size:12px;letter-spacing:.4px;color:#5a6b8a;-webkit-text-stroke:0.25px #5a6b8a;margin-right:11.8px;position:relative;top:0.8px">SUM</span><i style="display:block;width:11px;height:11px;border-radius:50%;background:#0fb35a;margin-right:7.5px"></i><span style="font-size:17px;color:#111a33;letter-spacing:0.85px;line-height:24px;position:relative;top:1.1px">$965.00</span></div>
<div class="a" style="left:437px;top:401.9px;width:1362px;height:1.5px;background:#e3e6ee;border-radius:0px;"></div>
<div class="num" style="left:461px;top:417.5px">5</div>
<svg style="left:581.3px;top:424.92px" width="10" height="5.5" viewBox="0 0 10 5.5"><path d="M0.5 0.5 L5.0 5.0 L9.5 0.5" fill="none" stroke="#2a3148" stroke-width="1.15"/></svg>
<svg style="left:606.4px;top:420.22px" width="16.5" height="13" viewBox="0 0 16.5 13"><path d="M0.65 2.4 V1.3 Q0.65 0.65 1.3 0.65 H7.4 L8.9 2.4 H15.2 Q15.85 2.4 15.85 3.1 V11.7 Q15.85 12.35 15.2 12.35 H1.3 Q0.65 12.35 0.65 11.7 Z M0.65 2.4 H8.9" fill="none" stroke="#1d2540" stroke-width="1.3" stroke-linejoin="round"/></svg>
<div class="t" style="left:634.8px;top:416.5px;font-size:16.6px;height:24px;line-height:24px;color:#111a33;font-weight:bold;letter-spacing:0.05px;">1. Equipment</div>
<div class="t" style="right:585.3px;top:416.3px;font-size:17px;height:24px;line-height:24px;color:#111a33;letter-spacing:0.65px;">1,800</div>
<div class="sum" style="right:641.7px;top:420.0px">SUM</div>
<div class="t" style="right:412.1px;top:416.3px;font-size:17px;height:24px;line-height:24px;color:#111a33;letter-spacing:0.85px;">835</div>
<div class="sum" style="right:454.2px;top:420.0px">SUM</div>
<div class="a" style="right:240.3px;top:415.2px;height:24px;display:flex;align-items:center;white-space:nowrap"><span style="font-size:12px;letter-spacing:.4px;color:#5a6b8a;-webkit-text-stroke:0.25px #5a6b8a;margin-right:11.8px;position:relative;top:0.8px">SUM</span><i style="display:block;width:11px;height:11px;border-radius:50%;background:#0fb35a;margin-right:7.5px"></i><span style="font-size:17px;color:#111a33;letter-spacing:0.85px;line-height:24px;position:relative;top:1.1px">$965.00</span></div>
<div class="a" style="left:437px;top:451.0px;width:1362px;height:1.5px;background:#e3e6ee;border-radius:0px;"></div>
<div class="num" style="left:461px;top:466.6px">6</div>
<svg style="left:635.5px;top:468.84000000000003px" width="15" height="15" viewBox="0 0 15 15"><path d="M1.3 0.7 H13 Q13.7 0.7 13.7 1.4 V9.3 L9.3 13.7 H1.4 Q0.7 13.7 0.7 13 V1.4 Q0.7 0.7 1.3 0.7 Z M13.7 9.3 H10 Q9.3 9.3 9.3 10 V13.7" fill="none" stroke="#1d2540" stroke-width="1.3" stroke-linejoin="round"/></svg>
<div class="t" style="left:662.0px;top:465.4px;font-size:17px;height:24px;line-height:24px;color:#111a33;letter-spacing:0.25px;">Vehicles to visit new client</div>
<div class="pill" style="left:897px;top:462.3px"><i></i><span style="top:3px;left:19.5px">New</span></div>
<div class="t" style="right:585.3px;top:465.4px;font-size:17px;height:24px;line-height:24px;color:#111a33;letter-spacing:0.65px;">800</div>
<div class="t" style="right:412.1px;top:465.4px;font-size:17px;height:24px;line-height:24px;color:#111a33;letter-spacing:0.85px;">200</div>
<div class="a" style="right:240.3px;top:464.3px;height:24px;display:flex;align-items:center;white-space:nowrap"><i style="display:block;width:11px;height:11px;border-radius:50%;background:#0fb35a;margin-right:7.5px"></i><span style="font-size:17px;color:#111a33;letter-spacing:0.85px;line-height:24px;position:relative;top:1.1px">$600.00</span></div>
<div class="a" style="left:437px;top:500.1px;width:1362px;height:1.5px;background:#e3e6ee;border-radius:0px;"></div>
<div class="num" style="left:461px;top:515.8px">7</div>
<svg style="left:635.5px;top:517.96px" width="15" height="15" viewBox="0 0 15 15"><path d="M1.3 0.7 H13 Q13.7 0.7 13.7 1.4 V9.3 L9.3 13.7 H1.4 Q0.7 13.7 0.7 13 V1.4 Q0.7 0.7 1.3 0.7 Z M13.7 9.3 H10 Q9.3 9.3 9.3 10 V13.7" fill="none" stroke="#1d2540" stroke-width="1.3" stroke-linejoin="round"/></svg>
<div class="t" style="left:662.0px;top:514.6px;font-size:17px;height:24px;line-height:24px;color:#111a33;letter-spacing:0.25px;">desks for visitors</div>
<div class="pill" style="left:897px;top:511.5px"><i></i><span style="top:3px;left:19.5px">New</span></div>
<div class="t" style="right:585.3px;top:514.6px;font-size:17px;height:24px;line-height:24px;color:#111a33;letter-spacing:0.65px;">1,000</div>
<div class="t" style="right:412.1px;top:514.6px;font-size:17px;height:24px;line-height:24px;color:#111a33;letter-spacing:0.85px;">635</div>
<div class="a" style="right:240.3px;top:513.5px;height:24px;display:flex;align-items:center;white-space:nowrap"><i style="display:block;width:11px;height:11px;border-radius:50%;background:#0fb35a;margin-right:7.5px"></i><span style="font-size:17px;color:#111a33;letter-spacing:0.85px;line-height:24px;position:relative;top:1.1px">$365.00</span></div>
<div class="a" style="left:437px;top:549.3px;width:1362px;height:1.5px;background:#e3e6ee;border-radius:0px;"></div>
<div class="num" style="left:461px;top:564.9px">8</div>
<svg style="left:581.3px;top:572.28px" width="10" height="5.5" viewBox="0 0 10 5.5"><path d="M0.5 0.5 L5.0 5.0 L9.5 0.5" fill="none" stroke="#2a3148" stroke-width="1.15"/></svg>
<svg style="left:606.4px;top:567.5799999999999px" width="16.5" height="13" viewBox="0 0 16.5 13"><path d="M0.65 2.4 V1.3 Q0.65 0.65 1.3 0.65 H7.4 L8.9 2.4 H15.2 Q15.85 2.4 15.85 3.1 V11.7 Q15.85 12.35 15.2 12.35 H1.3 Q0.65 12.35 0.65 11.7 Z M0.65 2.4 H8.9" fill="none" stroke="#1d2540" stroke-width="1.3" stroke-linejoin="round"/></svg>
<div class="t" style="left:634.8px;top:563.9px;font-size:16.6px;height:24px;line-height:24px;color:#111a33;font-weight:bold;letter-spacing:0.05px;">3. Office Maintenance</div>
<div class="a" style="right:240.3px;top:562.6px;height:24px;display:flex;align-items:center;white-space:nowrap"><span style="font-size:12px;letter-spacing:.4px;color:#5a6b8a;-webkit-text-stroke:0.25px #5a6b8a;margin-right:11.8px;position:relative;top:0.8px">SUM</span><i style="display:block;width:11px;height:11px;background:#d9213b;margin-right:7.5px"></i><span style="font-size:17px;color:#111a33;letter-spacing:0.85px;line-height:24px;position:relative;top:1.1px">$0.00</span></div>
<div class="a" style="left:437px;top:598.4px;width:1362px;height:1.5px;background:#e3e6ee;border-radius:0px;"></div>
<div class="num" style="left:461px;top:614.0px">9</div>
<svg style="left:635.5px;top:616.2px" width="15" height="15" viewBox="0 0 15 15"><path d="M1.3 0.7 H13 Q13.7 0.7 13.7 1.4 V9.3 L9.3 13.7 H1.4 Q0.7 13.7 0.7 13 V1.4 Q0.7 0.7 1.3 0.7 Z M13.7 9.3 H10 Q9.3 9.3 9.3 10 V13.7" fill="none" stroke="#1d2540" stroke-width="1.3" stroke-linejoin="round"/></svg>
<div class="a" style="left:662px;top:610.5px;width:213px;height:28px;overflow:hidden"><div class="t" style="left:0;top:2.3px;color:#111a33;letter-spacing:0.25px">Dusting and polishing furniture</div><div class="a" style="right:0;top:0;width:8px;height:28px;background:linear-gradient(90deg,rgba(255,255,255,.35),rgba(255,255,255,.85))"></div></div>
<div class="pill" style="left:897px;top:609.7px"><i></i><span style="top:3px;left:19.5px">New</span></div>
<div class="a" style="right:240.3px;top:611.7px;height:24px;display:flex;align-items:center;white-space:nowrap"><i style="display:block;width:11px;height:11px;background:#d9213b;margin-right:7.5px"></i><span style="font-size:17px;color:#111a33;letter-spacing:0.85px;line-height:24px;position:relative;top:1.1px">$0.00</span></div>
<div class="a" style="left:437px;top:647.5px;width:1362px;height:1.5px;background:#e3e6ee;border-radius:0px;"></div>
<div class="num" style="left:461px;top:663.1px">10</div>
<svg style="left:606.4px;top:665.8199999999999px" width="16.5" height="13" viewBox="0 0 16.5 13"><path d="M0.65 2.4 V1.3 Q0.65 0.65 1.3 0.65 H7.4 L8.9 2.4 H15.2 Q15.85 2.4 15.85 3.1 V11.7 Q15.85 12.35 15.2 12.35 H1.3 Q0.65 12.35 0.65 11.7 Z M0.65 2.4 H8.9" fill="none" stroke="#1d2540" stroke-width="1.3" stroke-linejoin="round"/></svg>
<div class="t" style="left:634.8px;top:662.1px;font-size:16.6px;height:24px;line-height:24px;color:#111a33;font-weight:bold;letter-spacing:0.05px;">4. Other</div>
<div class="a" style="right:240.3px;top:660.8px;height:24px;display:flex;align-items:center;white-space:nowrap"><span style="font-size:12px;letter-spacing:.4px;color:#5a6b8a;-webkit-text-stroke:0.25px #5a6b8a;margin-right:11.8px;position:relative;top:0.8px">SUM</span><i style="display:block;width:11px;height:11px;background:#d9213b;margin-right:7.5px"></i><span style="font-size:17px;color:#111a33;letter-spacing:0.85px;line-height:24px;position:relative;top:1.1px">$0.00</span></div>
<div class="a" style="left:437px;top:696.6px;width:1362px;height:1.5px;background:#e3e6ee;border-radius:0px;"></div>
<div class="num" style="left:461px;top:712.2px">11</div>
<svg style="left:554.8px;top:717.1400000000001px" width="5.5" height="9.8" viewBox="0 0 5.5 9.8"><path d="M0.5 0.5 L5.0 4.9 L0.5 9.3" fill="none" stroke="#2a3148" stroke-width="1.15"/></svg>
<svg style="left:577.4px;top:714.94px" width="16.5" height="13" viewBox="0 0 16.5 13"><path d="M0.65 2.4 V1.3 Q0.65 0.65 1.3 0.65 H7.4 L8.9 2.4 H15.2 Q15.85 2.4 15.85 3.1 V11.7 Q15.85 12.35 15.2 12.35 H1.3 Q0.65 12.35 0.65 11.7 Z M0.65 2.4 H8.9" fill="none" stroke="#1d2540" stroke-width="1.3" stroke-linejoin="round"/></svg>
<div class="t" style="left:605.8px;top:711.2px;font-size:16.6px;height:24px;line-height:24px;color:#111a33;font-weight:bold;letter-spacing:0.05px;">Meals and Entertainment</div>
<div class="t" style="right:585.3px;top:711.0px;font-size:17px;height:24px;line-height:24px;color:#111a33;letter-spacing:0.65px;">4,000</div>
<div class="t" style="right:412.1px;top:711.0px;font-size:17px;height:24px;line-height:24px;color:#111a33;letter-spacing:0.85px;">1,090</div>
<div class="a" style="right:240.3px;top:709.9px;height:24px;display:flex;align-items:center;white-space:nowrap"><span style="font-size:12px;letter-spacing:.4px;color:#5a6b8a;-webkit-text-stroke:0.25px #5a6b8a;margin-right:11.8px;position:relative;top:0.8px">SUM</span><i style="display:block;width:11px;height:11px;background:#d9213b;margin-right:7.5px"></i><span style="font-size:17px;color:#111a33;letter-spacing:0.85px;line-height:24px;position:relative;top:1.1px">-$1,090.00</span></div>
<div class="a" style="left:437px;top:745.8px;width:1362px;height:1.5px;background:#e3e6ee;border-radius:0px;"></div>
<div class="num" style="left:461px;top:761.4px">23</div>
<svg style="left:554.8px;top:766.26px" width="5.5" height="9.8" viewBox="0 0 5.5 9.8"><path d="M0.5 0.5 L5.0 4.9 L0.5 9.3" fill="none" stroke="#2a3148" stroke-width="1.15"/></svg>
<svg style="left:577.4px;top:764.06px" width="16.5" height="13" viewBox="0 0 16.5 13"><path d="M0.65 2.4 V1.3 Q0.65 0.65 1.3 0.65 H7.4 L8.9 2.4 H15.2 Q15.85 2.4 15.85 3.1 V11.7 Q15.85 12.35 15.2 12.35 H1.3 Q0.65 12.35 0.65 11.7 Z M0.65 2.4 H8.9" fill="none" stroke="#1d2540" stroke-width="1.3" stroke-linejoin="round"/></svg>
<div class="t" style="left:605.8px;top:760.4px;font-size:16.6px;height:24px;line-height:24px;color:#111a33;font-weight:bold;letter-spacing:0.05px;">Travel</div>
<div class="t" style="right:585.3px;top:760.2px;font-size:17px;height:24px;line-height:24px;color:#111a33;letter-spacing:0.65px;">3,000,000</div>
<div class="a" style="right:240.3px;top:759.1px;height:24px;display:flex;align-items:center;white-space:nowrap"><span style="font-size:12px;letter-spacing:.4px;color:#5a6b8a;-webkit-text-stroke:0.25px #5a6b8a;margin-right:11.8px;position:relative;top:0.8px">SUM</span><i style="display:block;width:11px;height:11px;background:#d9213b;margin-right:7.5px"></i><span style="font-size:17px;color:#111a33;letter-spacing:0.85px;line-height:24px;position:relative;top:1.1px">-$1,825.00</span></div>
<div class="a" style="left:437px;top:794.9px;width:1362px;height:1.5px;background:#e3e6ee;border-radius:0px;"></div>
<div class="num" style="left:461px;top:810.5px">32</div>
<svg style="left:554.8px;top:815.3800000000001px" width="5.5" height="9.8" viewBox="0 0 5.5 9.8"><path d="M0.5 0.5 L5.0 4.9 L0.5 9.3" fill="none" stroke="#2a3148" stroke-width="1.15"/></svg>
<svg style="left:577.4px;top:813.1800000000001px" width="16.5" height="13" viewBox="0 0 16.5 13"><path d="M0.65 2.4 V1.3 Q0.65 0.65 1.3 0.65 H7.4 L8.9 2.4 H15.2 Q15.85 2.4 15.85 3.1 V11.7 Q15.85 12.35 15.2 12.35 H1.3 Q0.65 12.35 0.65 11.7 Z M0.65 2.4 H8.9" fill="none" stroke="#1d2540" stroke-width="1.3" stroke-linejoin="round"/></svg>
<div class="t" style="left:605.8px;top:809.5px;font-size:16.6px;height:24px;line-height:24px;color:#111a33;font-weight:bold;letter-spacing:0.05px;">Professional Services</div>
<div class="t" style="right:585.3px;top:809.3px;font-size:17px;height:24px;line-height:24px;color:#111a33;letter-spacing:0.65px;">1,000,000</div>
<div class="a" style="right:240.3px;top:808.2px;height:24px;display:flex;align-items:center;white-space:nowrap"><span style="font-size:12px;letter-spacing:.4px;color:#5a6b8a;-webkit-text-stroke:0.25px #5a6b8a;margin-right:11.8px;position:relative;top:0.8px">SUM</span><i style="display:block;width:11px;height:11px;background:#d9213b;margin-right:7.5px"></i><span style="font-size:17px;color:#111a33;letter-spacing:0.85px;line-height:24px;position:relative;top:1.1px">-$2,200.00</span></div>
<div class="a" style="left:437px;top:844.0px;width:1362px;height:1.5px;background:#e3e6ee;border-radius:0px;"></div>
<div class="num" style="left:461px;top:859.6px">41</div>
<svg style="left:554.8px;top:864.5px" width="5.5" height="9.8" viewBox="0 0 5.5 9.8"><path d="M0.5 0.5 L5.0 4.9 L0.5 9.3" fill="none" stroke="#2a3148" stroke-width="1.15"/></svg>
<svg style="left:577.4px;top:862.3px" width="16.5" height="13" viewBox="0 0 16.5 13"><path d="M0.65 2.4 V1.3 Q0.65 0.65 1.3 0.65 H7.4 L8.9 2.4 H15.2 Q15.85 2.4 15.85 3.1 V11.7 Q15.85 12.35 15.2 12.35 H1.3 Q0.65 12.35 0.65 11.7 Z M0.65 2.4 H8.9" fill="none" stroke="#1d2540" stroke-width="1.3" stroke-linejoin="round"/></svg>
<div class="t" style="left:605.8px;top:858.6px;font-size:16.6px;height:24px;line-height:24px;color:#111a33;font-weight:bold;letter-spacing:0.05px;">Office Expenses</div>
<div class="t" style="right:585.3px;top:858.4px;font-size:17px;height:24px;line-height:24px;color:#111a33;letter-spacing:0.65px;">20,000</div>
<div class="a" style="right:240.3px;top:857.3px;height:24px;display:flex;align-items:center;white-space:nowrap"><span style="font-size:12px;letter-spacing:.4px;color:#5a6b8a;-webkit-text-stroke:0.25px #5a6b8a;margin-right:11.8px;position:relative;top:0.8px">SUM</span><i style="display:block;width:11px;height:11px;background:#d9213b;margin-right:7.5px"></i><span style="font-size:17px;color:#111a33;letter-spacing:0.85px;line-height:24px;position:relative;top:1.1px">-$2,845.00</span></div>
<div class="a" style="left:437px;top:893.1px;width:1362px;height:1.5px;background:#e3e6ee;border-radius:0px;"></div>
<div class="a" style="left:1014px;top:380px;width:67px;height:67px;border-radius:50%;background:rgba(12,196,96,.18)"></div>
<div class="a" style="left:1024.3px;top:390px;width:46.6px;height:46.6px;border-radius:50%;background:#0acb62"></div>
<div class="t" style="left:1040.5px;top:398.9px;font-size:27px;height:30px;line-height:30px;color:#fff;font-weight:bold;transform:scaleX(1.12);transform-origin:50% 50%;">8</div>
<div class="a" style="left:1099px;top:402px;width:484.5px;height:55px;border:3.5px solid #12c95a;border-radius:8px"></div>
<svg style="left:519.8px;top:914px" width="13" height="13" viewBox="0 0 13 13"><path d="M6.5 0 V13 M0 6.5 H13" stroke="#1d2540" stroke-width="1.4"/></svg>
<div class="t" style="left:546.2px;top:908.8px;font-size:17px;height:24px;line-height:24px;color:#111a33;">Item</div>
<svg style="left:595.5px;top:913.5px" width="13" height="7" viewBox="0 0 13 7"><path d="M0.8 6.5 L6.5 0.8 L12.2 6.5" fill="none" stroke="#6b7a99" stroke-width="1.3"/></svg>
<svg style="left:609.5px;top:914.2px" width="14.5" height="12.5" viewBox="0 0 14.5 12.5"><path d="M7.25 0.7 L13.6 6.6 H10.2 V11.9 H4.3 V6.6 H0.9 Z" fill="none" stroke="#6b7a99" stroke-width="1.3" stroke-linejoin="round"/></svg>
<div class="t" style="left:625.0px;top:908.8px;font-size:17px;height:24px;line-height:24px;color:#6b7a99;">N</div>
</body></html>
